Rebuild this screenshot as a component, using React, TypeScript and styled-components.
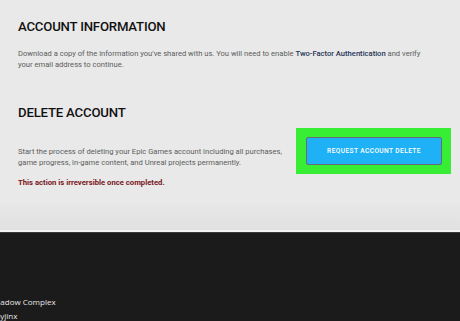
import React from 'react';
import styled, { createGlobalStyle } from 'styled-components';

const GlobalStyle = createGlobalStyle`
  html, body {
    margin: 0;
    padding: 0;
    background: #1c1c1c;
    overflow: hidden;
  }
  body {
    font-family: Roboto, "Liberation Sans", sans-serif;
  }
`;

const Page = styled.div`
  width: 460px;
  height: 321px;
  display: flex;
  flex-direction: column;
  overflow: hidden;
`;

const Main = styled.main`
  box-sizing: border-box;
  height: 205px;
  background: #e9e9e9;
  padding: 19px 18px 0 18px;
`;

const Section = styled.section<{ gap: number }>`
  margin-bottom: ${({ gap }) => gap}px;
`;

const Title = styled.h2`
  margin: 0;
  font-size: 13.2px;
  line-height: 16px;
  font-weight: 500;
  letter-spacing: -0.2px;
  color: #111;
`;

const Text = styled.p<{ width?: number }>`
  margin: 0;
  font-size: 7.6px;
  line-height: 10.5px;
  color: #5c5c5c;
  max-width: ${({ width }) => (width ? `${width}px` : 'none')};
`;

const Link = styled.a`
  color: #243456;
  font-weight: 500;
  text-decoration: none;
`;

const Row = styled.div`
  display: flex;
  align-items: flex-start;
  justify-content: space-between;
`;

const Column = styled.div`
  display: flex;
  flex-direction: column;
  gap: 10px;
`;

const Warning = styled.p`
  margin: 0;
  font-size: 7.7px;
  line-height: 10px;
  font-weight: 700;
  color: #7a1620;
`;

const Highlight = styled.div`
  background: #37ee35;
  padding: 9px 9px 9px 10px;
  margin-top: -19px;
  margin-right: -9px;
`;

const Button = styled.button`
  width: 136px;
  height: 28px;
  background: #1fb1f6;
  border: 1px solid #6a6a78;
  border-radius: 2px;
  color: #fff;
  font-family: Roboto, "Liberation Sans", sans-serif;
  font-size: 6.6px;
  font-weight: 500;
  letter-spacing: 0.4px;
  text-transform: uppercase;
  padding: 0;
`;

const Band = styled.div`
  height: 26px;
  background: linear-gradient(#e7e7e7, #e1e1e1);
`;

const Rule = styled.div`
  height: 2px;
  background: #f4f4f4;
  border-bottom: 1px solid #3a3a3a;
`;

const Footer = styled.footer`
  flex: 1;
  background: #1b1b1b;
  padding: 63px 0 0 0;
`;

const FooterList = styled.ul`
  list-style: none;
  margin: 0 0 0 -9px;
  padding: 0;
  display: flex;
  flex-direction: column;
  gap: 3px;
`;

const FooterItem = styled.li`
  font-family: "Open Sans", sans-serif;
  font-size: 8px;
  line-height: 11px;
  color: #e8e8e8;
`;

export default function App() {
  return (
    <Page>
      <GlobalStyle />
      <Main>
        <Section gap={35}>
          <Title>ACCOUNT INFORMATION</Title>
          <Text width={412} style={{ marginTop: 14 }}>
            Download a copy of the information you've shared with us. You will need to enable{' '}
            <Link href="#">Two-Factor Authentication</Link> and verify your email address to continue.
          </Text>
        </Section>
        <Section gap={0}>
          <Title>DELETE ACCOUNT</Title>
          <Row style={{ marginTop: 26 }}>
            <Column>
              <Text width={274}>
                Start the process of deleting your Epic Games account including all purchases,
                game progress, in-game content, and Unreal projects permanently.
              </Text>
              <Warning>This action is irreversible once completed.</Warning>
            </Column>
            <Highlight>
              <Button>Request Account Delete</Button>
            </Highlight>
          </Row>
        </Section>
      </Main>
      <Band />
      <Rule />
      <Footer>
        <FooterList>
          <FooterItem>Shadow Complex</FooterItem>
          <FooterItem>Spyjinx</FooterItem>
        </FooterList>
      </Footer>
    </Page>
  );
}
